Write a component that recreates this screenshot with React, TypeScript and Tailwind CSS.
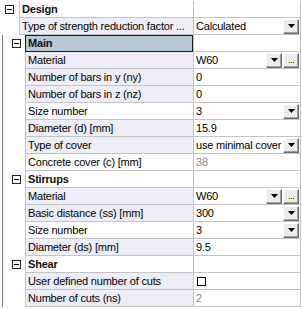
type Row =
  | { kind: "cat"; level: 0 | 1; label: string; selected?: boolean }
  | {
      kind: "prop";
      level: 0 | 1;
      label: string;
      value?: string;
      shade?: boolean;
      button?: "drop" | "dots";
      muted?: boolean;
      checkbox?: boolean;
    };

const rows: Row[] = [
  { kind: "cat", level: 0, label: "Design" },
  { kind: "prop", level: 0, label: "Type of strength reduction factor ...", value: "Calculated", shade: true, button: "drop" },
  { kind: "cat", level: 1, label: "Main", selected: true },
  { kind: "prop", level: 1, label: "Material", value: "W60", shade: true, button: "dots" },
  { kind: "prop", level: 1, label: "Number of bars in y (ny)", value: "0", shade: true },
  { kind: "prop", level: 1, label: "Number of bars in z (nz)", value: "0", shade: true },
  { kind: "prop", level: 1, label: "Size number", value: "3", button: "drop" },
  { kind: "prop", level: 1, label: "Diameter (d) [mm]", value: "15.9", shade: true },
  { kind: "prop", level: 1, label: "Type of cover", value: "use minimal cover", shade: true, button: "drop" },
  { kind: "prop", level: 1, label: "Concrete cover (c) [mm]", value: "38", muted: true },
  { kind: "cat", level: 1, label: "Stirrups" },
  { kind: "prop", level: 1, label: "Material", value: "W60", shade: true, button: "dots" },
  { kind: "prop", level: 1, label: "Basic distance (ss) [mm]", value: "300", shade: true, button: "drop" },
  { kind: "prop", level: 1, label: "Size number", value: "3", button: "drop" },
  { kind: "prop", level: 1, label: "Diameter (ds) [mm]", value: "9.5", shade: true },
  { kind: "cat", level: 1, label: "Shear" },
  { kind: "prop", level: 1, label: "User defined number of cuts", shade: true, checkbox: true },
  { kind: "prop", level: 1, label: "Number of cuts (ns)", value: "2", shade: true, muted: true },
];

const Minus = () => (
  <div className="flex h-[9px] w-[9px] items-center justify-center border border-[#222] bg-white">
    <div className="h-px w-[5px] bg-black" />
  </div>
);

const Arrow = () => (
  <svg width="7" height="4" viewBox="0 0 7 4">
    <path d="M0 0h7L3.5 4z" fill="#000" />
  </svg>
);

const Btn = ({ children }: { children: React.ReactNode }) => (
  <div className="flex h-[15px] w-[16px] items-center justify-center border-t border-l border-t-white border-l-white border-r border-b border-r-[#6b6b6b] border-b-[#6b6b6b] bg-[#ececec] shadow-[inset_-1px_-1px_0_#a0a0a0]">
    {children}
  </div>
);

const Gutter = ({ level, row }: { level: 0 | 1; row: Row }) => {
  const isCat = row.kind === "cat";
  if (level === 0) {
    return (
      <div className="flex w-[19px] shrink-0 items-center pl-[5px]">
        {isCat && <Minus />}
      </div>
    );
  }
  return (
    <div className="ml-[2px] flex w-[23px] shrink-0 items-center border-l border-[#7a7a7a] pl-[9px]">
      {isCat && <Minus />}
    </div>
  );
};

const RowView = ({ row }: { row: Row }) => {
  const nameBg =
    row.kind === "cat"
      ? row.selected
        ? "bg-[#b9c8d7] outline outline-1 -outline-offset-1 outline-[#1a1a1a]"
        : "bg-white"
      : row.shade
        ? "bg-[#eeeef8]"
        : "bg-white";

  return (
    <div className="flex h-[17px]">
      <Gutter level={row.level} row={row} />
      <div
        className={`flex min-w-0 flex-1 items-center overflow-hidden whitespace-nowrap border-b border-l border-[#c4c4c4] pl-[2px] ${nameBg} ${
          row.kind === "cat" ? "font-bold text-[#111]" : ""
        }`}
      >
        {row.label}
      </div>
      <div className="flex w-[108px] shrink-0 items-center border-b border-l border-r border-[#c4c4c4] bg-white pl-[2px] pr-[1px]">
        {row.kind === "prop" && (
          <>
            {row.checkbox ? (
              <div className="ml-px h-[9px] w-[9px] border border-black bg-white" />
            ) : (
              <span className={`flex-1 ${row.muted ? "text-[#8d8d8d]" : "text-black"}`}>
                {row.value}
              </span>
            )}
            {row.button === "drop" && (
              <Btn>
                <Arrow />
              </Btn>
            )}
            {row.button === "dots" && (
              <div className="flex gap-px">
                <Btn>
                  <Arrow />
                </Btn>
                <Btn>
                  <span className="text-[9px] leading-none tracking-[-0.5px]">...</span>
                </Btn>
              </div>
            )}
          </>
        )}
      </div>
    </div>
  );
};

export default function App() {
  return (
    <div className="h-[309px] w-[302px] overflow-hidden bg-white pt-px font-['Liberation_Sans',Arial,sans-serif] text-[11px] leading-[16px] tracking-[-0.2px] text-black">
      <div className="w-[301px]">
        {rows.map((row, i) => (
          <RowView key={i} row={row} />
        ))}
      </div>
    </div>
  );
}
